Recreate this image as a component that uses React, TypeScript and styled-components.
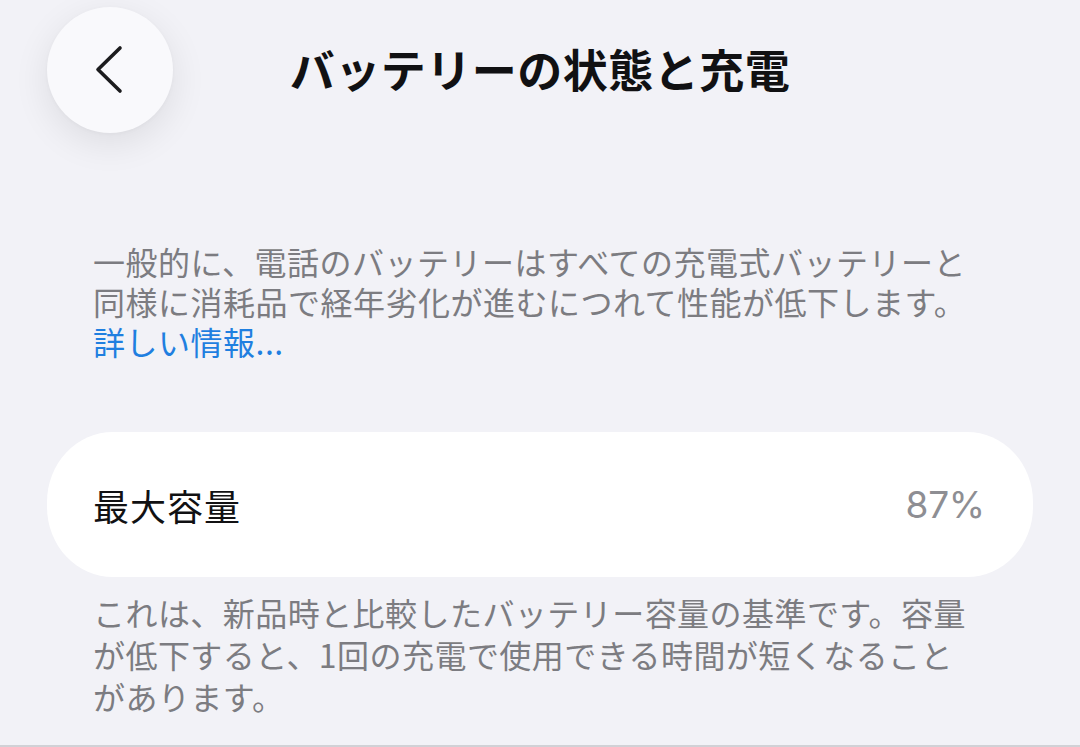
import styled, { createGlobalStyle } from "styled-components";

const GlobalStyle = createGlobalStyle`
  html, body {
    margin: 0;
    padding: 0;
    background: #f2f2f7;
  }
  body {
    font-family: "Noto Sans CJK JP", "Inter", sans-serif;
    -webkit-font-smoothing: antialiased;
  }
`;

const Page = styled.div`
  box-sizing: border-box;
  width: 1080px;
  height: 747px;
  padding: 7px 47px 0;
  border-bottom: 2px solid #d1d1d6;
  overflow: hidden;
`;

const Header = styled.header`
  display: grid;
  grid-template-columns: 126px 1fr 126px;
  align-items: center;
  height: 126px;
`;

const BackButton = styled.button`
  width: 126px;
  height: 126px;
  border: none;
  border-radius: 50%;
  background: #f9f9fc;
  box-shadow: 0 10px 36px rgba(0, 0, 0, 0.09), 0 1px 4px rgba(0, 0, 0, 0.03);
  display: flex;
  align-items: center;
  justify-content: center;
  padding: 0;
  cursor: pointer;
`;

const Title = styled.h1`
  margin: 0;
  text-align: center;
  font-size: 45px;
  font-weight: 700;
  color: #111113;
  line-height: 1;
  letter-spacing: 0.5px;
  padding-bottom: 4px;
`;

const Description = styled.p`
  margin: 108px 0 0;
  padding: 0 56px 0 46px;
  font-size: 32px;
  line-height: 40px;
  letter-spacing: 0.5px;
  color: #7c7c81;
`;

const Link = styled.a`
  display: block;
  color: #1f7fe0;
  text-decoration: none;
`;

const Card = styled.div`
  margin-top: 71px;
  height: 145px;
  display: flex;
  align-items: center;
  justify-content: space-between;
  padding: 0 48px 0 46px;
  background: #ffffff;
  border-radius: 66px / 70px;
`;

const Label = styled.span`
  font-size: 36px;
  color: #111113;
  letter-spacing: 1px;
`;

const Value = styled.span`
  font-family: "Inter", "Noto Sans", sans-serif;
  font-size: 37px;
  font-weight: 400;
  color: #8e8e93;
  letter-spacing: -0.2px;
`;

const Note = styled.p`
  margin: 14px 0 0;
  padding: 0 48px 0 46px;
  font-size: 32px;
  line-height: 42px;
  letter-spacing: 0.45px;
  color: #7c7c81;
`;

const Chevron = () => (
  <svg width="40" height="56" viewBox="0 0 40 56" fill="none">
    <path
      d="M30 6 L8 27.5 L30 49"
      stroke="#1c1c1e"
      strokeWidth="3.6"
      strokeLinecap="round"
      strokeLinejoin="round"
    />
  </svg>
);

const App = () => {
  return (
    <>
      <GlobalStyle />
      <Page>
        <Header>
          <BackButton aria-label="戻る">
            <Chevron />
          </BackButton>
          <Title>バッテリーの状態と充電</Title>
          <span />
        </Header>
        <Description>
          一般的に、電話のバッテリーはすべての充電式バッテリーと同様に消耗品で経年劣化が進むにつれて性能が低下します。
          <Link href="#">詳しい情報...</Link>
        </Description>
        <Card>
          <Label>最大容量</Label>
          <Value>87%</Value>
        </Card>
        <Note>
          これは、新品時と比較したバッテリー容量の基準です。容量が低下すると、1回の充電で使用できる時間が短くなることがあります。
        </Note>
      </Page>
    </>
  );
};

export default App;
